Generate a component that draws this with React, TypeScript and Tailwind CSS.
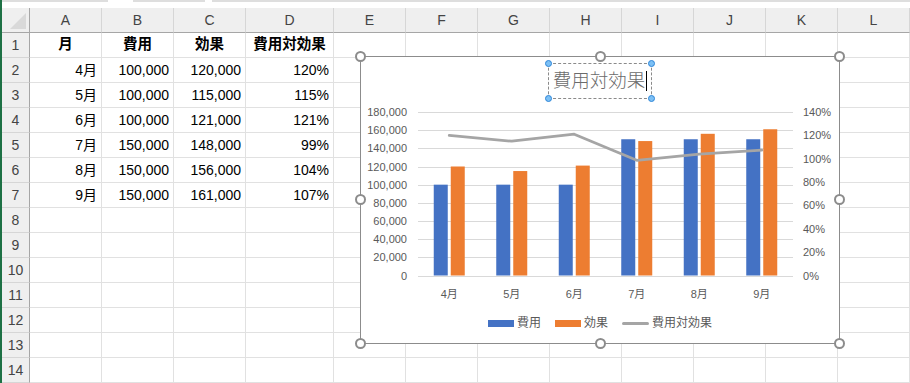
import React from "react";

const COLS = ["A", "B", "C", "D", "E", "F", "G", "H", "I", "J", "K", "L"];
const COL_W = [
  "w-[72px]",
  "w-[72px]",
  "w-[72px]",
  "w-[88px]",
  "w-[72px]",
  "w-[72px]",
  "w-[72px]",
  "w-[72px]",
  "w-[72px]",
  "w-[72px]",
  "w-[72px]",
  "w-[72px]",
];

const HEAD = ["月", "費用", "効果", "費用対効果"];
const DATA = [
  ["4月", "100,000", "120,000", "120%"],
  ["5月", "100,000", "115,000", "115%"],
  ["6月", "100,000", "121,000", "121%"],
  ["7月", "150,000", "148,000", "99%"],
  ["8月", "150,000", "156,000", "104%"],
  ["9月", "150,000", "161,000", "107%"],
];

// chart data (thousands)
const cats = ["4月", "5月", "6月", "7月", "8月", "9月"];
const cost = [100, 100, 100, 150, 150, 150];
const effect = [120, 115, 121, 148, 156, 161];

const PLOT_L = 57;
const PLOT_R = 432;
const PLOT_T = 13;
const PLOT_B = 176.5;
const CAT_W = (PLOT_R - PLOT_L) / 6;

const yLeft = (v: number) => PLOT_B - (v / 180) * (PLOT_B - PLOT_T);
const yRight = (p: number) => PLOT_B - (p / 140) * (PLOT_B - PLOT_T);
const cx = (i: number) => PLOT_L + CAT_W / 2 + i * CAT_W;

function Handle({ className }: { className: string }) {
  return (
    <div
      className={`absolute w-[11px] h-[11px] rounded-full border-2 border-[#8c8c8c] bg-white ${className}`}
    />
  );
}

function Dot({ className }: { className: string }) {
  return (
    <div
      className={`absolute w-[7px] h-[7px] rounded-full border border-[#2f86d8] bg-[#7cc0f5] ${className}`}
    />
  );
}

function Chart() {
  const leftTicks = [0, 20, 40, 60, 80, 100, 120, 140, 160, 180];
  const rightTicks = [0, 20, 40, 60, 80, 100, 120, 140];
  const ratio = effect.map((e, i) => (e / cost[i]) * 100);
  const linePts = ratio.map((r, i) => `${cx(i)},${yRight(r)}`).join(" ");

  return (
    <div className="absolute left-[360px] top-[56px] w-[480px] h-[288px] border border-[#8c8c8c] bg-white">
      <div className="flex justify-center pt-[6px]">
        <div className="relative w-[104px] h-[36px] border border-dashed border-[#8a8a8a] flex items-center justify-center">
          <span className="text-[18.5px] font-light text-[#6b6b6b] leading-none">費用対効果</span>
          <span className="w-px h-[20px] bg-black ml-[1px]" />
          <Dot className="left-[-4px] top-[-4px]" />
          <Dot className="right-[-4px] top-[-4px]" />
          <Dot className="left-[-4px] bottom-[-4px]" />
          <Dot className="right-[-4px] bottom-[-4px]" />
        </div>
      </div>

      <svg width="478" height="210" className="block">
        {leftTicks.map((v) => {
          const y = Math.round(yLeft(v)) + 0.5;
          return (
            <g key={v}>
              <line x1={PLOT_L} x2={PLOT_R} y1={y} y2={y} stroke="#d9d9d9" strokeWidth="1" />
              <text x="46" y={yLeft(v) + 4} textAnchor="end" fontSize="11" fill="#595959">
                {v === 0 ? "0" : `${v},000`}
              </text>
            </g>
          );
        })}
        {rightTicks.map((p) => (
          <text key={p} x="442" y={yRight(p) + 4} fontSize="11" fill="#595959">
            {p}%
          </text>
        ))}
        {cats.map((c, i) => {
          const x = cx(i);
          return (
            <g key={c}>
              <rect x={x - 15.5} y={yLeft(cost[i])} width="14" height={PLOT_B - yLeft(cost[i])} fill="#4472c4" />
              <rect x={x + 1.5} y={yLeft(effect[i])} width="14" height={PLOT_B - yLeft(effect[i])} fill="#ed7d31" />
              <text x={x} y="199" textAnchor="middle" fontSize="11" fill="#595959">
                {c}
              </text>
            </g>
          );
        })}
        <polyline
          points={linePts}
          fill="none"
          stroke="#a5a5a5"
          strokeWidth="2.75"
          strokeLinejoin="round"
          strokeLinecap="round"
        />
      </svg>

      <div className="mt-[6px] h-[16px] flex items-center justify-center text-[12px] text-[#595959]">
        <span className="w-[26px] h-[7px] bg-[#4472c4] mr-[3px]" />
        <span>費用</span>
        <span className="w-[26px] h-[7px] bg-[#ed7d31] ml-[14px] mr-[3px]" />
        <span>効果</span>
        <span className="w-[27px] h-[3px] bg-[#a5a5a5] rounded-full ml-[14px] mr-[3px]" />
        <span>費用対効果</span>
      </div>

      <Handle className="left-[-6px] top-[-6px]" />
      <Handle className="left-[234px] top-[-6px]" />
      <Handle className="right-[-6px] top-[-6px]" />
      <Handle className="left-[-6px] top-[137px]" />
      <Handle className="right-[-6px] top-[137px]" />
      <Handle className="left-[-6px] bottom-[-6px]" />
      <Handle className="left-[234px] bottom-[-6px]" />
      <Handle className="right-[-6px] bottom-[-6px]" />
    </div>
  );
}

function Cell({ col, row }: { col: number; row: number }) {
  let content: React.ReactNode = null;
  let align = "justify-end pr-[4px]";
  if (row === 1 && col < 4) {
    content = <span className="font-bold text-[14.5px]">{HEAD[col]}</span>;
    align = "justify-center";
  } else if (row >= 2 && row <= 7 && col < 4) {
    content = DATA[row - 2][col];
  }
  return (
    <div
      className={`${COL_W[col]} h-[25px] shrink-0 flex items-center ${align} border-r border-b border-[#e1e1e1] text-[14px] text-black`}
    >
      {content}
    </div>
  );
}

export default function App() {
  const rows = Array.from({ length: 14 }, (_, i) => i + 1);
  return (
    <div className="relative w-[910px] h-[383px] bg-white overflow-hidden font-['Liberation_Sans','Noto_Sans_CJK_JP',sans-serif]">
      <div className="flex h-[8px]">
        <div className="w-[2px] h-full bg-[#1e7145]" />
        <div className="flex-1 flex items-start">
          <div className="w-[106px] h-[2px] bg-[#dedede]" />
          <div className="w-[25px]" />
          <div className="w-[72px] h-[2px] bg-[#dedede]" />
          <div className="w-[7px]" />
          <div className="flex-1 h-[2px] bg-[#dedede]" />
        </div>
      </div>

      <div className="flex">
        <div className="w-[2px] bg-[#1e7145]" />
        <div className="flex flex-col">
          <div className="flex">
            <div className="w-[28px] h-[25px] shrink-0 bg-[#efefef] border-r border-b border-[#a6a6a6] flex items-end justify-end pr-[3px] pb-[3px]">
              <svg width="16" height="16">
                <polygon points="16,0 16,16 0,16" fill="#d9d9d9" />
              </svg>
            </div>
            {COLS.map((c, i) => (
              <div
                key={c}
                className={`${COL_W[i]} h-[25px] shrink-0 bg-[#efefef] border-r border-r-[#d6d6d6] border-b border-b-[#a6a6a6] flex items-center justify-center text-[14px] text-[#444]`}
              >
                {c}
              </div>
            ))}
          </div>
          {rows.map((r) => (
            <div key={r} className="flex">
              <div className="w-[28px] h-[25px] shrink-0 bg-[#efefef] border-r border-r-[#a6a6a6] border-b border-b-[#d6d6d6] flex items-center justify-center text-[14px] text-[#444]">
                {r}
              </div>
              {COLS.map((c, i) => (
                <Cell key={c} col={i} row={r} />
              ))}
            </div>
          ))}
        </div>
      </div>

      <Chart />
    </div>
  );
}
